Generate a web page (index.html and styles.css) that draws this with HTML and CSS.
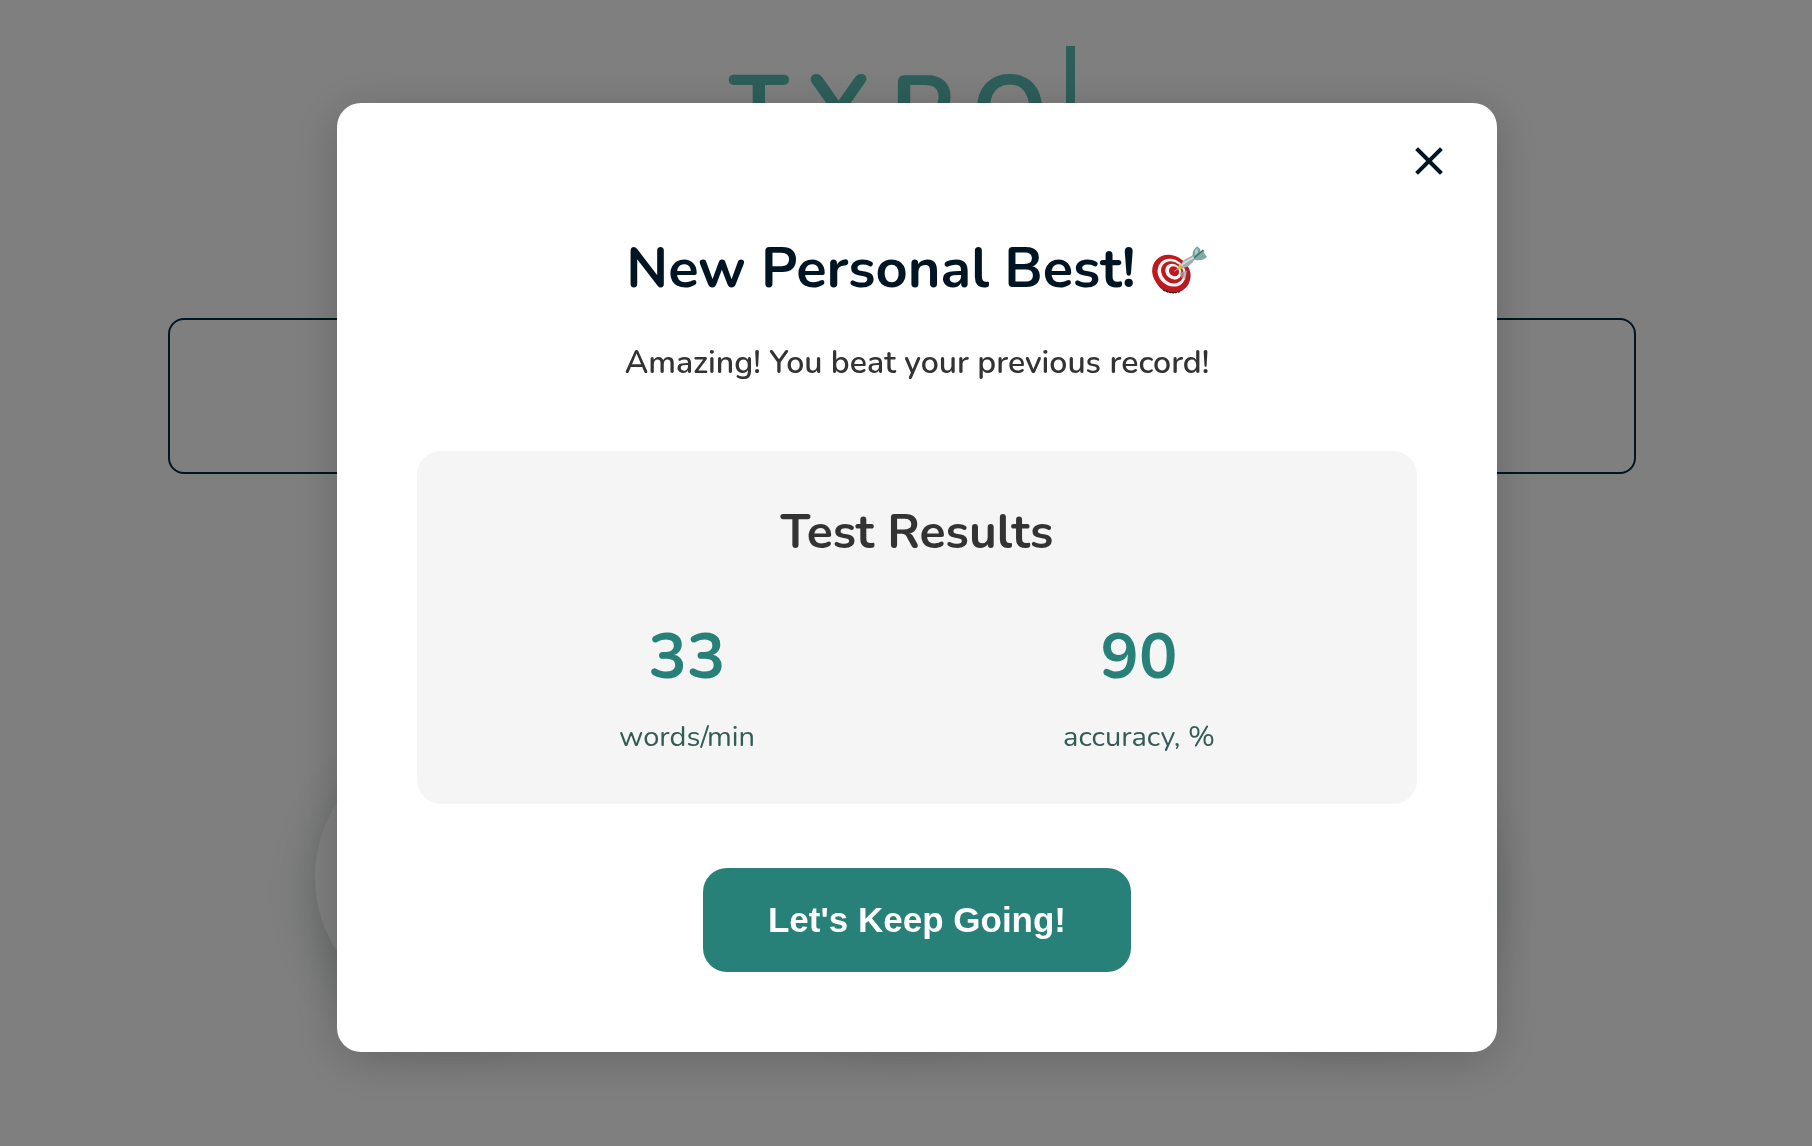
FILE: index.html
```
<!DOCTYPE html>
<html lang="en">
<head>
  <meta charset="utf-8">
  <meta name="viewport" content="width=device-width, initial-scale=1">
  <title>TYPO</title>
  <link rel="stylesheet" href="styles.css">
</head>
<body>
  <main class="page">
    <h1 class="logo">TYPO</h1>
    <div class="typing-box"></div>
    <div class="scores">
      <div class="score"></div>
      <div class="score"></div>
      <div class="score"></div>
    </div>
  </main>

  <div class="overlay">
    <section class="modal" role="dialog" aria-modal="true" aria-labelledby="modal-title">
      <button class="close" type="button" aria-label="Close">
        <svg width="30" height="30" viewBox="0 0 30 30" fill="none" stroke="currentColor" stroke-width="4" stroke-linecap="square" stroke-linejoin="round"><path d="M4 4 26 26M26 4 4 26"/></svg>
      </button>
      <h2 class="title" id="modal-title">
        New Personal Best!
        <svg class="dart" viewBox="2 0 168 168" aria-hidden="true">
          <ellipse cx="64" cy="103" rx="54" ry="53" fill="#8e1a1e" transform="rotate(35 64 103)"/>
          <path d="M36 147Q62 161 88 151" fill="none" stroke="#2b1216" stroke-width="4" stroke-dasharray="6 3"/>
          <ellipse cx="59" cy="97" rx="60" ry="52" fill="#bd1a20" transform="rotate(42 59 97)"/>
          <ellipse cx="61" cy="95" rx="45" ry="39" fill="#fbf8f6" transform="rotate(42 61 95)"/>
          <ellipse cx="63" cy="94" rx="36" ry="31" fill="#bd1a20" transform="rotate(42 63 94)"/>
          <ellipse cx="66" cy="92" rx="26" ry="22" fill="#fbf8f6" transform="rotate(42 66 92)"/>
          <ellipse cx="68" cy="91" rx="16" ry="14" fill="#bd1a20" transform="rotate(42 68 91)"/>
          <path d="M84 96 108 88 102 114 90 110Z" fill="#9aa5a5" opacity=".7"/>
          <path d="M69 91 88 77" stroke="#d9a79a" stroke-width="3"/>
          <path d="M84 68 98 82 86 85 80 80Z" fill="#e0b42b"/>
          <path d="M88 74Q92 58 108 52L130 40 137 47 122 66Q110 80 94 81Z" fill="#9dafae"/>
          <path d="M90 72Q98 60 112 55L131 44 128 52Q108 62 90 76Z" fill="#d5dddc"/>
          <path d="M124 46Q122 26 138 16L146 24 148 32 134 48Z" fill="#6fa39f"/>
          <path d="M132 48 148 34Q154 24 159 28L158 36 167 48Q152 62 128 56Z" fill="#7faaa6"/>
          <path d="M128 51 156 27" stroke="#35706d" stroke-width="4"/>
          <path d="M132 26 138 20 140 34 130 44Z" fill="#b9d0cd"/>
        </svg>
      </h2>
      <p class="message">Amazing! You beat your previous record!</p>
      <div class="results">
        <h3 class="results-title">Test Results</h3>
        <dl class="stats">
          <div class="stat">
            <dt class="stat-label">words/min</dt>
            <dd class="stat-value">33</dd>
          </div>
          <div class="stat">
            <dt class="stat-label">accuracy, %</dt>
            <dd class="stat-value">90</dd>
          </div>
        </dl>
      </div>
      <button class="continue" type="button">Let's Keep Going!</button>
    </section>
  </div>
</body>
</html>
```

FILE: styles.css
```
* {
  box-sizing: border-box;
}

body,
h1,
h2,
h3,
p,
dl,
dd {
  margin: 0;
}

body {
  background: #fefffe;
  color: #333;
  font-family: Nunito, Lato, sans-serif;
}

.page {
  display: flex;
  flex-direction: column;
  align-items: center;
  min-height: 100vh;
  padding: 46px 176px 0 168px;
}

.logo {
  border-right: 9px solid #5abeb4;
  color: #5abeb4;
  font-size: 96px;
  font-weight: 700;
  letter-spacing: 19px;
  line-height: 132px;
}

.typing-box {
  width: 100%;
  height: 156px;
  margin-top: 140px;
  border: 2px solid #002c44;
  border-radius: 16px;
}

.scores {
  display: flex;
  justify-content: space-between;
  width: 100%;
  margin-top: 266px;
  padding: 0 147px;
}

.score {
  width: 274px;
  height: 274px;
  border-radius: 50%;
  background: #fefffe;
  box-shadow: 0 16px 56px rgba(0, 40, 36, 0.2);
}

.overlay {
  position: fixed;
  inset: 0;
  display: flex;
  align-items: center;
  justify-content: center;
  padding: 9px 0 0 22px;
  background: rgba(0, 0, 0, 0.5);
}

.modal {
  position: relative;
  display: flex;
  flex-direction: column;
  align-items: center;
  width: 100%;
  max-width: 1160px;
  padding: 128px 80px 80px;
  border-radius: 24px;
  background: #fefffe;
  box-shadow: 0 8px 48px rgba(0, 0, 0, 0.2);
}

.close {
  position: absolute;
  top: 34px;
  right: 44px;
  display: grid;
  place-items: center;
  width: 48px;
  height: 48px;
  padding: 0;
  border: 0;
  background: none;
  color: #001524;
}

.title {
  display: flex;
  align-items: center;
  gap: 16px;
  color: #001524;
  font-size: 56px;
  font-weight: 700;
  line-height: 76px;
}

.dart {
  width: 56px;
  height: 56px;
}

.message {
  margin-top: 34px;
  font-size: 32px;
  font-weight: 600;
  line-height: 44px;
}

.results {
  width: 100%;
  margin: 66px 0 64px;
  padding: 48px;
  border-radius: 24px;
  background: #f5f5f5;
}

.results-title {
  font-size: 48px;
  font-weight: 700;
  line-height: 66px;
  text-align: center;
}

.stats {
  display: flex;
  justify-content: space-around;
  margin-top: 48px;
}

.stat {
  display: flex;
  flex-direction: column-reverse;
  align-items: center;
  gap: 16px;
}

.stat-value {
  color: #278178;
  font-size: 64px;
  font-weight: 700;
  line-height: 88px;
}

.stat-label {
  color: #335c57;
  font-size: 29px;
  line-height: 39px;
}

.continue {
  padding: 32px 65px;
  border: 0;
  border-radius: 24px;
  background: #278178;
  color: #fefffe;
  font-family: "Liberation Sans", Arial, sans-serif;
  font-size: 35px;
  font-weight: 700;
  line-height: 40px;
}
```
